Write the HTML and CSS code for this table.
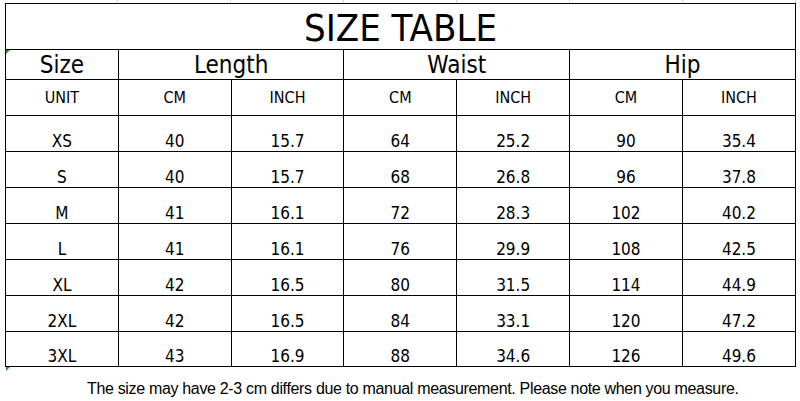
FILE: index.html
```html
<!DOCTYPE html>
<html lang="en">
<head>
    <meta charset="UTF-8">
    <meta name="viewport" content="width=device-width, initial-scale=1.0">
    <title>Size Table</title>
    <link rel="stylesheet" href="styles.css">
</head>
<body>
    <div class="sheet">
        <div class="grid-strip">
            <span></span><span></span><span></span><span></span><span></span><span></span><span></span>
        </div>

        <table class="size-table">
            <tr class="title-row">
                <td colspan="7">SIZE TABLE</td>
            </tr>
            <tr class="head-row">
                <td class="marked">Size</td>
                <td colspan="2">Length</td>
                <td colspan="2">Waist</td>
                <td colspan="2">Hip</td>
            </tr>
            <tr class="unit-row">
                <td>UNIT</td>
                <td>CM</td>
                <td>INCH</td>
                <td>CM</td>
                <td>INCH</td>
                <td>CM</td>
                <td>INCH</td>
            </tr>
            <tr class="data-row">
                <td>XS</td><td>40</td><td>15.7</td><td>64</td><td>25.2</td><td>90</td><td>35.4</td>
            </tr>
            <tr class="data-row">
                <td>S</td><td>40</td><td>15.7</td><td>68</td><td>26.8</td><td>96</td><td>37.8</td>
            </tr>
            <tr class="data-row">
                <td>M</td><td>41</td><td>16.1</td><td>72</td><td>28.3</td><td>102</td><td>40.2</td>
            </tr>
            <tr class="data-row">
                <td>L</td><td>41</td><td>16.1</td><td>76</td><td>29.9</td><td>108</td><td>42.5</td>
            </tr>
            <tr class="data-row">
                <td>XL</td><td>42</td><td>16.5</td><td>80</td><td>31.5</td><td>114</td><td>44.9</td>
            </tr>
            <tr class="data-row">
                <td>2XL</td><td>42</td><td>16.5</td><td>84</td><td>33.1</td><td>120</td><td>47.2</td>
            </tr>
            <tr class="data-row last">
                <td class="marked-bottom">3XL</td><td>43</td><td>16.9</td><td>88</td><td>34.6</td><td>126</td><td>49.6</td>
            </tr>
        </table>

        <p class="note">The size may have 2-3 cm differs due to manual measurement. Please note when you measure.</p>
    </div>
</body>
</html>
```

FILE: styles.css
```css
body {
    margin: 0;
    background-color: #fff;
    font-family: "DejaVu Sans Condensed", "DejaVu Sans", sans-serif;
    color: #000;
}

.sheet {
    padding-left: 5px;
    width: 791px;
}

.grid-strip {
    display: grid;
    grid-template-columns: repeat(7, 113px);
    height: 3px;
}

.grid-strip span {
    border-right: 1px solid #d4d4d4;
}

.size-table {
    border-collapse: collapse;
    table-layout: fixed;
    width: 791px;
}

.size-table td {
    border: 1px solid #000;
    text-align: center;
    padding: 0;
    width: 113px;
}

.title-row td {
    height: 43px;
    font-size: 38px;
    line-height: 1;
    padding-top: 2px;
}

.head-row td {
    height: 29px;
    font-size: 24px;
    line-height: 1;
}

.unit-row td {
    height: 35px;
    font-size: 16px;
}

.data-row td {
    height: 35px;
    font-size: 17px;
    vertical-align: bottom;
    line-height: 20px;
}

.data-row.last td {
    height: 34px;
}

.marked,
.marked-bottom {
    position: relative;
}

.marked::before {
    content: "";
    position: absolute;
    left: 0;
    top: 0;
    border-top: 4px solid #2e8b2e;
    border-right: 4px solid transparent;
}

.marked-bottom::after {
    content: "";
    position: absolute;
    left: 0;
    bottom: -5px;
    border-top: 4px solid #2e8b2e;
    border-right: 4px solid transparent;
}

.note {
    margin: 13px 0 0 82px;
    font-family: "Liberation Sans", Arial, sans-serif;
    font-size: 16px;
    letter-spacing: -0.33px;
    white-space: nowrap;
}
```
